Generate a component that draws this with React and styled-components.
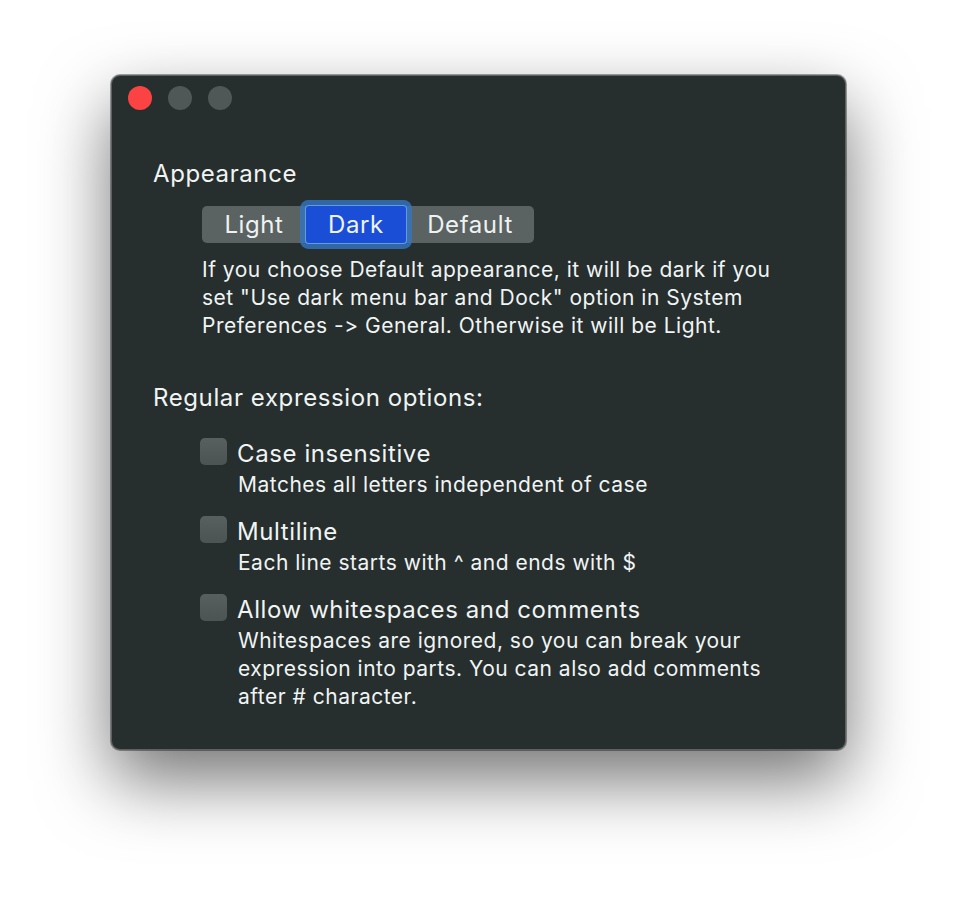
import { useState } from 'react';
import { styled, createGlobalStyle } from 'styled-components';

const GlobalStyle = createGlobalStyle`
  html, body {
    margin: 0;
    padding: 0;
    background: #ffffff;
  }
  body {
    font-family: Inter, "Noto Sans", sans-serif;
    font-feature-settings: "calt" 0, "liga" 0;
    font-variant-ligatures: none;
    -webkit-font-smoothing: antialiased;
  }
`;

const modes = [
  { name: 'Light', width: 104 },
  { name: 'Dark', width: 100 },
  { name: 'Default', width: 128 },
];

const options = [
  {
    id: 'case',
    label: 'Case insensitive',
    lines: ['Matches all letters independent of case'],
  },
  {
    id: 'multi',
    label: 'Multiline',
    lines: ['Each line starts with ^ and ends with $'],
  },
  {
    id: 'ws',
    label: 'Allow whitespaces and comments',
    lines: [
      'Whitespaces are ignored, so you can break your',
      'expression into parts. You can also add comments',
      'after # character.',
    ],
  },
];

const App = () => {
  const [mode, setMode] = useState('Dark');
  const [checked, setChecked] = useState({});

  return (
    <Page>
      <GlobalStyle />
      <Window>
        <TitleBar>
          <Light $color="#fc4343" />
          <Light $color="#4f5757" />
          <Light $color="#4f5757" />
        </TitleBar>
        <Content>
          <Heading>Appearance</Heading>
          <Indented>
            <Segmented>
              {modes.map((m) => (
                <Segment
                  key={m.name}
                  $w={m.width}
                  $active={mode === m.name}
                  onClick={() => setMode(m.name)}
                >
                  {m.name}
                </Segment>
              ))}
            </Segmented>
            <Note>
              If you choose Default appearance, it will be dark if you
              <br />
              set "Use dark menu bar and Dock" option in System
              <br />
              Preferences -&gt; General. Otherwise it will be Light.
            </Note>
          </Indented>

          <Heading $spaced>Regular expression options:</Heading>
          <OptionList>
            {options.map((o) => (
              <Option key={o.id}>
                <OptionHead
                  onClick={() =>
                    setChecked((c) => ({ ...c, [o.id]: !c[o.id] }))
                  }
                >
                  <Checkbox $on={!!checked[o.id]} />
                  <OptionLabel>{o.label}</OptionLabel>
                </OptionHead>
                <OptionText>
                  {o.lines.map((l) => (
                    <div key={l}>{l}</div>
                  ))}
                </OptionText>
              </Option>
            ))}
          </OptionList>
        </Content>
      </Window>
    </Page>
  );
};

const Page = styled.div`
  padding: 75px 0 0 111px;
  height: 898px;
  box-sizing: border-box;
`;

const Window = styled.div`
  width: 735px;
  height: 675px;
  box-sizing: border-box;
  background: #262e2e;
  border: 1px solid #5c6262;
  border-radius: 9px;
  box-shadow: 0 30px 70px rgba(0, 0, 0, 0.55), 0 0 0 1px rgba(0, 0, 0, 0.35);
  color: #f0f4f3;
`;

const TitleBar = styled.div`
  display: flex;
  gap: 16px;
  box-sizing: border-box;
  padding: 10px 0 0 16px;
  height: 44px;
`;

const Light = styled.span`
  width: 24px;
  height: 24px;
  border-radius: 50%;
  background: ${(p) => p.$color};
`;

const Content = styled.div`
  padding: 39px 0 0 41px;
`;

const Heading = styled.div`
  font-size: 24px;
  line-height: 30px;
  letter-spacing: 0.6px;
  margin-top: ${(p) => (p.$spaced ? '43px' : '0')};
`;

const Indented = styled.div`
  padding-left: 49px;
`;

const Segmented = styled.div`
  display: inline-flex;
  margin-top: 17px;
  height: 37px;
  background: #5b6262;
  border-radius: 5px;
`;

const Segment = styled.div`
  position: relative;
  display: flex;
  align-items: center;
  justify-content: center;
  width: ${(p) => p.$w}px;
  font-size: 24px;
  letter-spacing: 0.6px;
  border-radius: ${(p) => (p.$active ? '3px' : '5px')};
  cursor: default;
  color: #eef3f2;
  background: ${(p) => (p.$active ? '#1a4ed6' : 'transparent')};
  box-shadow: ${(p) =>
    p.$active
      ? '0 0 0 1px #5d9de0, 0 0 0 6px rgba(52, 118, 194, 0.8)'
      : 'none'};
`;

const Note = styled.div`
  margin-top: 13px;
  font-size: 21px;
  line-height: 28px;
  letter-spacing: 0.5px;
`;

const OptionList = styled.div`
  display: flex;
  flex-direction: column;
  gap: 17px;
  padding-left: 47px;
  margin-top: 25px;
`;

const Option = styled.div`
  display: flex;
  flex-direction: column;
`;

const OptionHead = styled.div`
  display: flex;
  align-items: flex-start;
  gap: 10px;
  cursor: default;
`;

const Checkbox = styled.span`
  flex: none;
  width: 27px;
  height: 27px;
  border-radius: 5px;
  box-sizing: border-box;
  background: ${(p) =>
    p.$on ? '#1a4ed6' : 'linear-gradient(#585f5f, #4b5353)'};
`;

const OptionLabel = styled.span`
  font-size: 24px;
  line-height: 32px;
  letter-spacing: 0.6px;
`;

const OptionText = styled.div`
  margin-top: 1px;
  padding-left: 38px;
  font-size: 21px;
  line-height: 28px;
  letter-spacing: 0.5px;
`;

export default App;
